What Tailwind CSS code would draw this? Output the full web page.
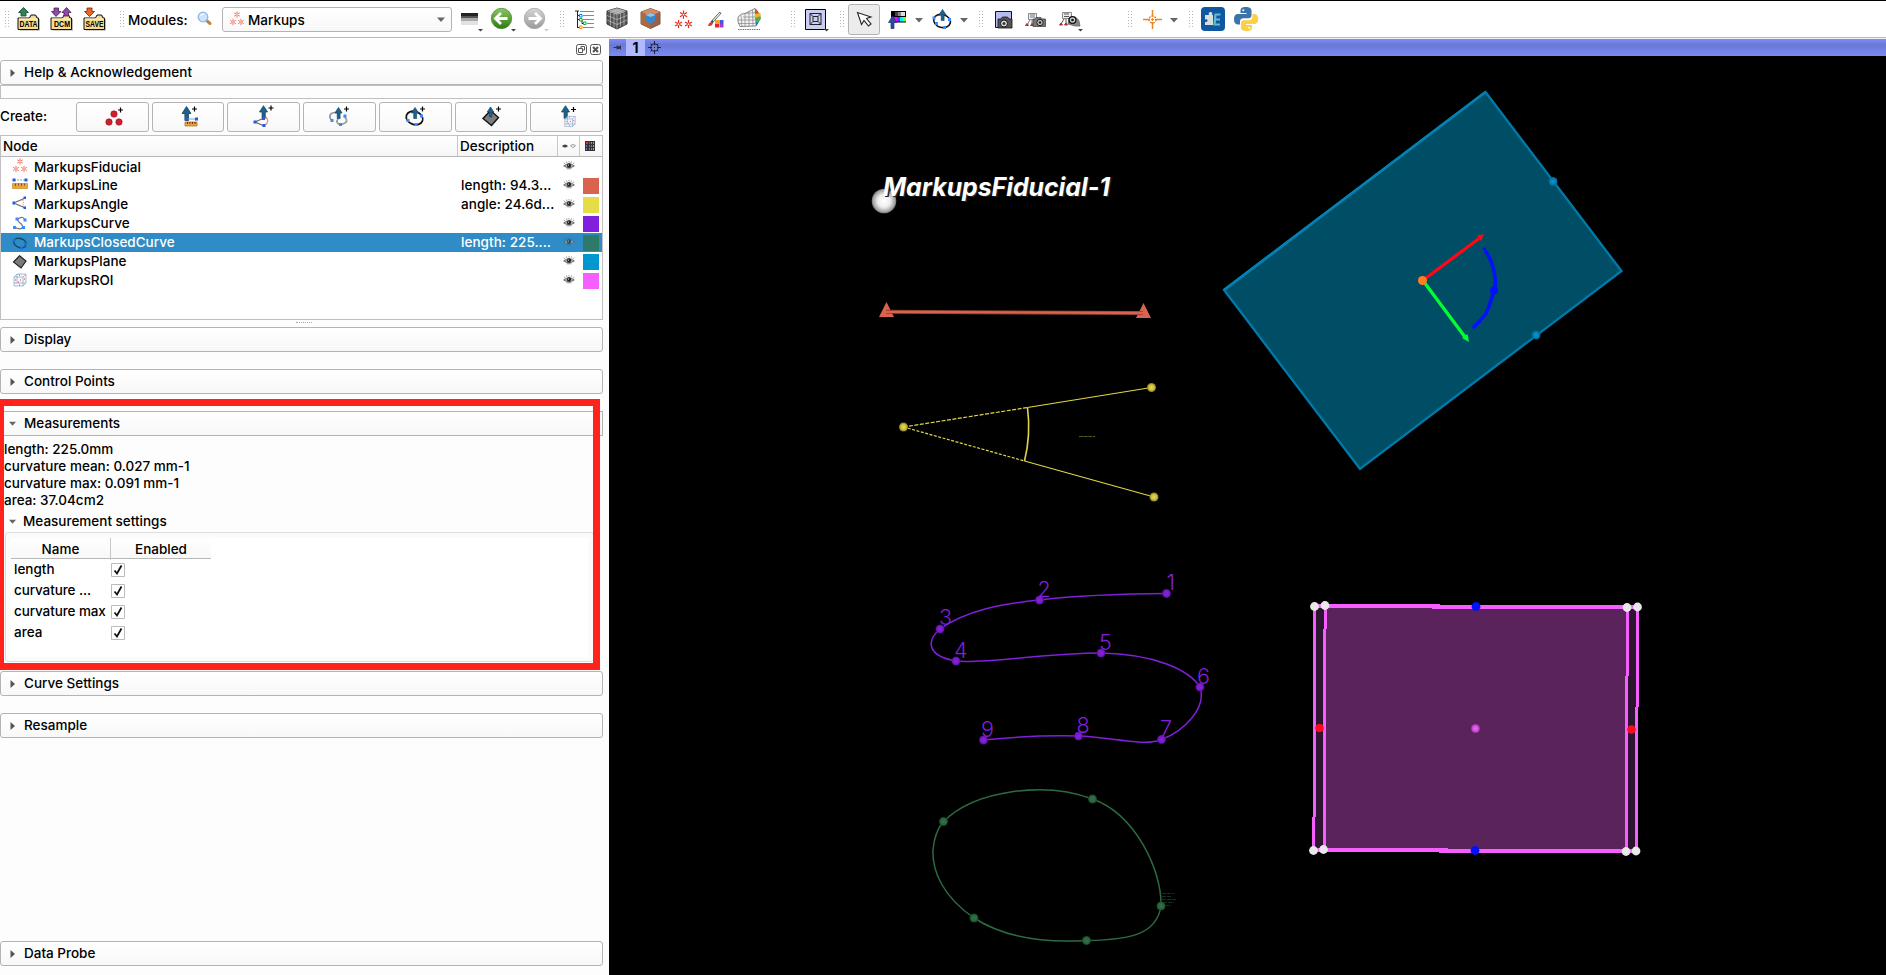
<!DOCTYPE html>
<html lang="en">
<head>
<meta charset="utf-8">
<title>Markups</title>
<script src="https://cdn.jsdelivr.net/npm/@tailwindcss/browser@4"></script>
</head>
<body class="w-[1886px] h-[975px] overflow-hidden bg-[#fdfdfd] text-black text-[13.5px] leading-[17px] font-medium font-['Inter',sans-serif] flex flex-col">

<!-- shared symbols; toolbar icons are drawn in toolbar coordinates -->
<svg class="absolute w-0 h-0">
  <defs>
    <symbol id="grip" viewBox="0 0 6 18"><path d="M1.5 1v17M4.5 1v17" stroke="#b5b5b5" stroke-dasharray="1 2" /></symbol>
    <symbol id="star" viewBox="0 0 8 8"><path d="M4 .2v7.600M.8 2.100l6.400 3.800M7.200 2.100L.8 5.900" stroke="currentColor" stroke-width="1.100" fill="none"/><circle cx="4" cy="4" r=".8" fill="#fff"/></symbol>
    <symbol id="stars" viewBox="0 0 16 16"><use href="#star" x="4.5" y="1" width="7" height="7"/><use href="#star" x="0.5" y="8.5" width="7" height="7"/><use href="#star" x="8.5" y="8.5" width="7" height="7"/></symbol>
    <symbol id="up" viewBox="0 0 10 15"><path d="M5 .5L9.5 7.5H7V14.500H3.400V7.500H.5z" fill="#1f5f8b" stroke="#12405f" stroke-width=".8"/></symbol>
    <symbol id="eye" viewBox="0 0 14 11"><path d="M.5 6Q7 .8 13.500 6 7 10.500.5 6z" fill="#bbb" stroke="#555" stroke-width="1"/><circle cx="7" cy="5.500" r="2.600" fill="#222"/><circle cx="6.300" cy="5" r=".8" fill="#ddd"/><path d="M2 3.500L1 2M4.500 2.300L4 .7M7 1.800V.2M9.500 2.300l.6-1.600M12 3.500l1-1.500M4 9.500h6" stroke="#555" stroke-width=".8"/></symbol>
    <symbol id="right" viewBox="0 0 5 8"><path d="M.5 0v8L5 4z" fill="#555"/></symbol>
    <symbol id="down" viewBox="0 0 8 5"><path d="M0 .5h8L4 5z" fill="#666"/></symbol>
    <symbol id="roi" viewBox="0 0 14 14"><path d="M1 4l3-3h9v9l-3 3H1zM1 4h9v9M10 4l3-3M4 1v9H1m3 0h9" fill="#eef4fb" fill-opacity=".6" stroke="#94aac6" stroke-width=".8"/><path d="M2 7h1M5 9h1M7 7h1M11 6h1M6 2h1M6 12h1" stroke="#e33" stroke-width="1"/></symbol>
    <symbol id="folder" viewBox="0 0 24 18"><path d="M2 5.500h11l1.500-3.500h4.500l1.500 3.500H22V17H2z" fill="#333" opacity=".45" transform="translate(.8 .6)"/><path d="M1 5h11.500L14 2h4.500L20 5h1.500v11.500H1z" fill="#f4dc92" stroke="#111" stroke-width="1"/><path d="M2 6h18.500" stroke="#fff6d0"/></symbol>
    <radialGradient id="sph"><stop offset="0" stop-color="#fff"/><stop offset=".5" stop-color="#eee"/><stop offset=".85" stop-color="#aaa"/><stop offset="1" stop-color="#777"/></radialGradient>
    <radialGradient id="gy"><stop offset="0" stop-color="#e8dc4c"/><stop offset=".6" stop-color="#cbc03e"/><stop offset="1" stop-color="#7d7620"/></radialGradient>
    <radialGradient id="gp"><stop offset="0" stop-color="#8a22e2"/><stop offset=".7" stop-color="#751bc4"/><stop offset="1" stop-color="#400d70"/></radialGradient>
    <radialGradient id="gg"><stop offset="0" stop-color="#307348"/><stop offset=".7" stop-color="#29643d"/><stop offset="1" stop-color="#153820"/></radialGradient>
    <radialGradient id="gb"><stop offset="0" stop-color="#0a95cf"/><stop offset=".6" stop-color="#0580b4"/><stop offset="1" stop-color="#005f86"/></radialGradient>
    <radialGradient id="gm"><stop offset="0" stop-color="#f560ff"/><stop offset=".6" stop-color="#d650e0"/><stop offset="1" stop-color="#8a3590"/></radialGradient>
    <linearGradient id="grn" x2="0" y2="1"><stop offset="0" stop-color="#8fc75f"/><stop offset="1" stop-color="#2b7a12"/></linearGradient>
    <linearGradient id="gry" x2="0" y2="1"><stop offset="0" stop-color="#d6d6d6"/><stop offset="1" stop-color="#999"/></linearGradient>
  </defs>
</svg>

<!-- toolbar -->
<header class="h-[38px] shrink-0 border-t border-t-black border-b border-b-[#b9b9b9] bg-white flex items-stretch">
  <svg class="shrink-0 w-[128px] h-[36px]" viewBox="0 1 128 36" font-family="Liberation Sans" font-weight="bold" font-size="8.500">
    <use href="#grip" x="4" y="10" width="6" height="18"/>
    <use href="#folder" x="17" y="13" width="24" height="18"/><path d="M23.500 7.500l5 5H26V16h-5v-3.500h-2.500z" fill="#2c8457" stroke="#143" stroke-width=".8"/><text x="19.500" y="27" textLength="18" lengthAdjust="spacingAndGlyphs">DATA</text>
    <use href="#folder" x="50" y="13" width="24" height="18"/><path d="M56 16.500l-4.500-5H54V8h4.500v3.500H61z" fill="#9146b4" stroke="#424" stroke-width=".8"/><path d="M66.500 7.500l4.500 5h-2.500V16H64v-3.500h-2z" fill="#9146b4" stroke="#424" stroke-width=".8"/><text x="54" y="27" textLength="16" lengthAdjust="spacingAndGlyphs">DCM</text>
    <use href="#folder" x="83" y="13" width="24" height="18"/><path d="M89.500 16.500l-5-5H87V8h5v3.500h2.500z" fill="#ee6420" stroke="#721" stroke-width=".8"/><text x="85.500" y="27" textLength="18" lengthAdjust="spacingAndGlyphs">SAVE</text>
    <use href="#grip" x="119" y="10" width="6" height="18"/>
  </svg>
  <span class="w-[66px] shrink-0 self-center whitespace-nowrap pt-[2px]">Modules:</span>
  <svg class="shrink-0 w-[28px] h-[36px]" viewBox="194 1 28 36"><path d="M206 20l4 3.500" stroke="#b98746" stroke-width="3" stroke-linecap="round"/><circle cx="203" cy="17" r="4.800" fill="#cfe4fb" stroke="#8ab8ea" stroke-width="1.300"/><path d="M200.500 16a3 3 0 0 1 3-2" stroke="#fff" fill="none"/></svg>
  <div class="w-[230px] h-[25px] mt-[6px] shrink-0 border border-[#b4b4b4] rounded-[3px] bg-linear-to-b from-white to-[#f8f8f8] flex items-center px-[6px]">
    <svg class="w-4 h-4 text-[#f0705c] mr-[3px] mb-1" viewBox="0 0 16 16"><use href="#stars"/></svg>
    <span class="grow pt-px">Markups</span>
    <svg class="w-2 h-[5px]"><use href="#down"/></svg>
  </div>
  <svg class="shrink-0 w-[434px] h-[36px]" viewBox="452 1 434 36">
    <path d="M461 13h17v4h-17z" fill="#222"/><path d="M461 16h17v2h-17z" fill="#555"/><path d="M461 18h17v3h-17z" fill="#aaa"/><path d="M461 21h17v4h-17z" fill="#e2e2e2"/>
    <path d="M478 29h5l-2.500 2.500zM511 29h5l-2.500 2.500z" fill="#444"/><path d="M544 29h5l-2.500 2.500z" fill="#ccc"/>
    <circle cx="501.500" cy="18.500" r="10.200" fill="url(#grn)" stroke="#4b8b36" stroke-width=".8"/><path d="M507.500 18.500H496M501 13l-5.500 5.500L501 24" stroke="#fff" stroke-width="2.800" fill="none"/>
    <circle cx="534.500" cy="18.500" r="10.200" fill="url(#gry)" stroke="#a2a2a2" stroke-width=".8"/><path d="M528.500 18.500H540M535 13l5.500 5.500L535 24" stroke="#fff" stroke-width="2.800" fill="none"/>
    <use href="#grip" x="559" y="10" width="6" height="18"/>
    <path d="M575 11h4" stroke="#222"/><path d="M580 11.500h14M583 15.500h11M583 19.500h11M587 23.500h7M583 27.500h11" stroke="#888"/><path d="M577.500 11v17M577 15.500h3M577 19.500h5v4h2M577 27.500h3" stroke="#222" fill="none"/><path d="M579.500 14.500h2.500v2.500h-2.500z" fill="#fff" stroke="#17f"/><path d="M579.500 18.500h2.500v2.500h-2.500zM583.500 22h2.500v2.500h-2.500z" fill="#fff" stroke="#1a4"/><path d="M579.500 26h2.500v2.500h-2.500z" fill="#fff" stroke="#f80"/>
    <path d="M607 11l10-3 10 3v13l-10 5-10-5z" fill="#555" stroke="#333"/><path d="M607 11l10-3 10 3-10 4z" fill="#999"/><path d="M607 15.500l10 4 10-4M607 20l10 4.500 10-4.500M610.500 12.500v13M614 14v13.500M617 15v14M620.500 13.500v13M624 12.500v13M610.500 10l10 3.500M613.500 9l10 3.500M623.500 10l-10 4M620.500 9l-10 3.500" stroke="#ccc" stroke-width=".6" fill="none"/>
    <path d="M641 12l9.500-3.500L660 12v12l-9.500 4.500L641 24z" fill="#9b6045" stroke="#7b5a4a"/><path d="M641 12l9.500-3.500L660 12l-9.500 4z" fill="#d58a5f"/><path d="M650.500 16v12.500L641 24V12z" fill="#b0683f"/><path d="M645.500 15l5-2 5 2v6l-5 3-5-3z" fill="#3a87c8"/><path d="M645.500 15l5-2 5 2-5 2z" fill="#8cc4ef"/>
    <svg x="673.500" y="9" width="20" height="20" viewBox="0 0 16 16" color="#e32a1a"><use href="#stars"/></svg>
    <path d="M715 20h4v4h-4z" fill="#f4a81c"/><path d="M719.500 20h4v4h-4z" fill="#3d57f0"/><path d="M715 24h4v3.500h-4z" fill="#e4262c"/><path d="M719.500 24h4v3.500h-4z" fill="#a536cf"/><path d="M720.500 12.500l-9 10" stroke="#444" stroke-width="2.500"/><path d="M720 13l-7 7.800" stroke="#eee" stroke-width="1.200"/><path d="M708 26q1-4 3.500-4l1.500 1.500q-1 3-5 2.500z" fill="#d33"/>
    <path d="M738 17q3-4 7-3.500l10-5q5 5 5.500 10l-4.500 7.500-16 .5q-3-5-2-9.500z" fill="#f2f2f2" stroke="#555" stroke-width=".7"/><path d="M741 15l1 11.500M745 13.500v13M749 11.500v15M752.500 10l.5 16M738 20h17M738 23.500h17M743 17h12M746 13.500l9-1" stroke="#777" stroke-width=".6"/><path d="M755 8.500q6 5 5.500 10L756 26q-2-9-1-17.500z" fill="#4bb04a"/><path d="M755 8.500q3 2 4.500 6L755 17z" fill="#e84b1d"/><path d="M755 14l5.500-1 .2 3L755 18z" fill="#f2b51e"/><path d="M755.500 22l3 .2-2.500 4z" fill="#2a73c8"/><path d="M738 29.500h22" stroke="#777" stroke-dasharray="1.500 .8" stroke-width="1.200"/>
    <use href="#grip" x="790" y="10" width="6" height="18"/>
    <path d="M805.500 9.500h20v20h-20z" fill="#cccdf2" stroke="#000"/><path d="M810 13.500h11v11h-11zM813 16.500h5v5H813zM810 13.500l3 3M821 13.500l-3 3M810 24.500l3-3M821 24.500l-3-3" stroke="#222" stroke-width="1" fill="none"/><path d="M824 29h5l-2.500 2.500z" fill="#444"/>
    <use href="#grip" x="839" y="10" width="6" height="18"/>
    <rect x="848.500" y="4.500" width="31" height="30" rx="2" fill="#ececec" stroke="#b2b2b2"/><path d="M857.500 12.500l4 12 2.500-4 4.500 5.500 2.500-2-4.500-5.500 4.500-1.500z" fill="#fff" stroke="#222" stroke-width="1.100"/>
  </svg>
  <svg class="shrink-0 w-[384px] h-[36px]" viewBox="886 1 384 36">
    <path d="M891 11h15v6h-15z" fill="#000"/><path d="M895 12h3v4h-3z" fill="#444"/><path d="M898 12h3v4h-3z" fill="#888"/><path d="M901 12h4v4h-4z" fill="#ddd"/><path d="M891 17h3v5h-3z" fill="#f03"/><path d="M894 17h3v5h-3z" fill="#f0f"/><path d="M897 17h3v5h-3z" fill="#44f"/><path d="M900 17h3v5h-3z" fill="#0ee"/><path d="M903 17h3v5h-3z" fill="#7f2"/><path d="M891 22h15" stroke="#000"/>
    <path d="M892.500 16l4 6.500H894V28.500h-3v-6h-2.500z" fill="#2b4b9b" stroke="#1d3575" stroke-width=".7"/>
    <path d="M915 18h8l-4 4.500zM960 18h8l-4 4.500zM1170 18h8l-4 4.500z" fill="#666"/>
    <ellipse cx="942" cy="21" rx="8.500" ry="6.500" fill="none" stroke="#111" stroke-width="1.600" transform="rotate(15 942 21)"/><use href="#up" x="937" y="9" width="11" height="12"/><path d="M932.500 16.500h3v3h-3zM948 18h3v3h-3zM935 22h3v3h-3zM943 26h3v3h-3z" fill="#3b8bff"/>
    <use href="#grip" x="978" y="10" width="6" height="18"/>
    <path d="M995.500 11.500h16v16h-16z" fill="#b5bbf3" stroke="#111"/><path d="M998 19h3l1.500-2h5l1.500 2h3v9h-14z" fill="#555" stroke="#111" stroke-width=".8"/><circle cx="1004" cy="23.500" r="3.500" fill="#ddd" stroke="#111"/><circle cx="1004" cy="23.500" r="1.500" fill="#333"/>
    <path d="M1028.500 13.500h8v6h-8z" fill="#eef" stroke="#888"/><path d="M1030 20l-3 5M1032 20v5M1030 15h5M1030 17h5" stroke="#777" fill="none"/><path d="M1025.500 25.500l1.500-2 1.500 2zM1030.500 25.500l1.500-2 1.500 2z" fill="#a33" stroke="#a33"/><path d="M1033 19h2l1-1.500h5l1 1.500h3.500v7.500H1033z" fill="#777" stroke="#444" stroke-width=".8"/><circle cx="1040" cy="22.500" r="3.200" fill="#bbb" stroke="#222"/><circle cx="1040" cy="22.500" r="1.200" fill="#222"/>
    <path d="M1062.500 12.500h9v6h-9z" fill="#eef" stroke="#888"/><path d="M1064 19l-3 5M1066 19v5M1064 14h5M1064 16.500h5" stroke="#555" fill="none"/><path d="M1059.500 25l1.500-2 1.500 2zM1064.500 25l1.500-2 1.500 2z" fill="#a33" stroke="#a33"/><path d="M1069 18q7-3 10 3l1 5h-5l-7-2z" fill="#888" stroke="#666" stroke-width=".8"/><circle cx="1072.500" cy="20" r="3.400" fill="#ccc" stroke="#111" stroke-width="1.300"/><circle cx="1072.500" cy="20" r="1.300" fill="#111"/><path d="M1078 29h5l-2.500 2.500z" fill="#444"/>
    <use href="#grip" x="1127" y="10" width="6" height="18"/>
    <g stroke="#e8862a" fill="none" stroke-width="1.500"><path d="M1152.500 10v7M1152.500 22v7M1143 19.500h7M1155 19.500h7"/><circle cx="1152.500" cy="19.500" r="3.500" stroke-dasharray="2 1"/><path d="M1151 19.500h3M1152.500 18v3" stroke-width="1.200"/></g>
    <use href="#grip" x="1188" y="10" width="6" height="18"/>
    <rect x="1201" y="7" width="24" height="24" rx="4" fill="#1156a0"/><path d="M1205 15h4q-1-3 1.500-3t1.500 3h1v10h-8v-3q2.500.5 2.500-1.500t-2.500-1z" fill="#d9dfdf"/><path d="M1220.500 14.500h-5l-1 10h5.500M1215 19.500h5" stroke="#5bc0d2" stroke-width="2.200" fill="none"/>
    <path d="M1246 7c-5 0-5.500 2-5.500 3.500V13h6v1h-8.500c-3 0-4 2.500-4 5.300s1.300 5.200 3.700 5.200h2.300v-3c0-2 1.500-3.200 3.500-3.200h5c1.800 0 3-1.300 3-3v-4.800C1251.500 8 1249 7 1246 7z" fill="#3a74a8"/><path d="M1246.500 31c5 0 5.500-2 5.500-3.500V25h-6v-1h8.500c2.500 0 3.700-2.400 3.700-5s-1-5-3.500-5h-2.300v2.800c0 2-1.500 3.400-3.500 3.400h-5c-1.800 0-3 1.200-3 3v4.500c0 2.300 2.600 3.300 5.600 3.300z" fill="#fcd045"/><circle cx="1243.300" cy="10.200" r="1" fill="#fff"/><circle cx="1249.200" cy="27.800" r="1" fill="#fff"/>
  </svg>
</header>

<div class="flex grow min-h-0">
  <!-- module panel -->
  <aside class="relative w-[609px] shrink-0 flex flex-col pr-[6px]">
    <div class="h-[22px] shrink-0 flex justify-end items-center gap-[3px] pr-[2px]">
      <svg class="w-[11px] h-[11px]" viewBox="0 0 11 11" fill="none" stroke="#555"><rect x=".5" y=".5" width="10" height="10" rx="2"/><path d="M5 4V2.500h3.500V6H7M2.500 4.500h4v4h-4z"/></svg>
      <svg class="w-[11px] h-[11px]" viewBox="0 0 11 11" fill="none" stroke="#555"><rect x=".5" y=".5" width="10" height="10" rx="2"/><path d="M3 3l5 5M8 3L3 8" stroke-width="2"/></svg>
    </div>
    <div class="h-[25px] shrink-0 border border-[#b4b4b4] rounded-[3px] bg-linear-to-b from-white to-[#f8f8f8] flex items-center pl-[9px]"><svg class="w-[5px] h-2 mr-[9px]"><use href="#right"/></svg><span class="tracking-[0.08px]">Help &amp; Acknowledgement</span></div>
    <div class="h-[14px] shrink-0 border border-[#c0c0c0]"></div>
    <div class="h-[36px] shrink-0 flex items-center pt-0">
      <span class="w-[76px] pb-px">Create:</span>
      <div class="grow grid grid-cols-7 gap-[3px]">
        <div class="h-[30px] border border-[#b4b4b4] rounded-[3px] bg-linear-to-b from-white to-[#f8f8f8] flex justify-center items-center pl-[3px]"><svg class="w-6 h-6" viewBox="0 0 24 24"><g fill="#cf1f2c" stroke="#8a1019" stroke-width=".6"><circle cx="12" cy="9" r="3.200"/><circle cx="7" cy="17" r="3.200"/><circle cx="17" cy="17" r="3.200"/></g><path d="M18.500 2.500v5M16 5h5" stroke="#000" stroke-width="1.200"/></svg></div>
        <div class="h-[30px] border border-[#b4b4b4] rounded-[3px] bg-linear-to-b from-white to-[#f8f8f8] flex justify-center items-center pl-[3px]"><svg class="w-6 h-6" viewBox="0 0 24 24"><use href="#up" x="3.500" y="1" width="10" height="15"/><path d="M8 14h12" stroke="#99b" /><path d="M7 12.500h3v3H7zM17 12.500h3v3h-3z" fill="#245bdc"/><path d="M7 17h12v4H7z" fill="#eba43a" stroke="#a66a14" stroke-width=".7"/><path d="M9.500 17v2M12 17v2M14.500 17v2M17 17v2" stroke="#633"/><path d="M16.500 1.500v5M14 4h5" stroke="#000" stroke-width="1.200"/></svg></div>
        <div class="h-[30px] border border-[#b4b4b4] rounded-[3px] bg-linear-to-b from-white to-[#f8f8f8] flex justify-center items-center pl-[1px]"><svg class="w-6 h-6" viewBox="0 0 24 24"><path d="M3 17l9-4M3 17l8 3.500" stroke="#666" stroke-width="1.300"/><path d="M14 12q4 5-1 8" stroke="#e88" fill="none" stroke-width="1.300"/><use href="#up" x="7" y="0" width="9" height="14"/><path d="M1.500 15.500h3v3h-3zM10 12h3v3h-3zM10.500 19h3v3h-3z" fill="#245bdc"/><path d="M19 .5v5M16.500 3h5" stroke="#000" stroke-width="1.200"/></svg></div>
        <div class="h-[30px] border border-[#b4b4b4] rounded-[3px] bg-linear-to-b from-white to-[#f8f8f8] flex justify-center items-center"><svg class="w-6 h-6" viewBox="0 0 24 24"><path d="M5 15.500C1 12 3 7.500 8 7.500S13 12 11 14s-1 5.500 2.500 5.500 7-2.500 6-5-2-2-2.500-3.500" fill="none" stroke="#999" stroke-width="1.700"/><use href="#up" x="7" y="2" width="9" height="12"/><path d="M3.500 14h3v3h-3zM16.500 9.500h3v3h-3zM12 18h3v3h-3z" fill="#3b8bff"/><path d="M19.500 1.500v5M17 4h5" stroke="#000" stroke-width="1.200"/></svg></div>
        <div class="h-[30px] border border-[#b4b4b4] rounded-[3px] bg-linear-to-b from-white to-[#f8f8f8] flex justify-center items-center"><svg class="w-6 h-6" viewBox="0 0 24 24"><ellipse cx="11.500" cy="13" rx="8.500" ry="6.500" fill="none" stroke="#111" stroke-width="1.700" transform="rotate(20 11.500 13)"/><use href="#up" x="7.500" y="2" width="9" height="12"/><path d="M3.500 14h3v3h-3zM17 9.500h3v3h-3zM11.500 18h3v3h-3z" fill="#3b8bff"/><path d="M19.500 1.500v5M17 4h5" stroke="#000" stroke-width="1.200"/></svg></div>
        <div class="h-[30px] border border-[#b4b4b4] rounded-[3px] bg-linear-to-b from-white to-[#f8f8f8] flex justify-center items-center"><svg class="w-6 h-6" viewBox="0 0 24 24"><path d="M11.500 5.500l8 7-7 8-8.500-7z" fill="#7d7d7d" stroke="#111" stroke-width="1.400"/><use href="#up" x="7" y="1.500" width="9" height="11"/><path d="M19.500 1.500v5M17 4h5" stroke="#000" stroke-width="1.200"/></svg></div>
        <div class="h-[30px] border border-[#b4b4b4] rounded-[3px] bg-linear-to-b from-white to-[#f8f8f8] flex justify-center items-center pl-[5px]"><svg class="w-6 h-6" viewBox="0 0 24 24"><use href="#up" x="4" y="0" width="9" height="14"/><use href="#roi" x="7" y="10.500" width="12" height="12"/><path d="M16.500 2v5M14 4.500h5" stroke="#000" stroke-width="1.200"/></svg></div>
      </div>
    </div>

    <!-- node table -->
    <div class="h-[185px] shrink-0 border border-[#c0c0c0] bg-white flex flex-col">
      <div class="h-[21px] shrink-0 border-b border-[#b8b8b8] bg-linear-to-b from-white to-[#f6f6f6] grid grid-cols-[456px_100px_22px_1fr] items-center">
        <span class="pl-[2px] pt-px">Node</span>
        <span class="pl-[2px] pt-px border-l border-[#c8c8c8] leading-[19px]">Description</span>
        <span class="h-full border-l border-[#c8c8c8] flex justify-center items-center"><svg class="w-[14px] h-[6px]" viewBox="0 0 14 6"><path d="M0 3q3-3 6 0-3 3-6 0z" fill="#444"/><path d="M8.500 2.500q2.500 4 5 0M8.500 2.500q2.500-2 5 0" fill="none" stroke="#999"/></svg></span>
        <span class="h-full border-l border-[#c8c8c8] flex items-center pl-[5px]"><svg class="w-[10px] h-[10px]" viewBox="0 0 10 10"><path fill="#333" d="M0 0h10v10H0z"/><path d="M1 1h2v2H1z" fill="#f22"/><path d="M4 1h1v2H4z" fill="#a44"/><path d="M6 1h1v2H6zM8 1h1v2H8z" fill="#6b6"/><path d="M1 4h1v2H1zM1 7h1v2H1z" fill="#96c"/><path d="M4 4h1v2H4zM4 7h1v2H4z" fill="#487"/><path d="M6 4h1v2H6zM6 7h1v2H6z" fill="#58b"/><path d="M8 4h1v2H8zM8 7h1v2H8z" fill="#aa7"/></svg></span>
      </div>

      <div class="h-[19px] shrink-0 grid grid-cols-[33px_423px_103px_23px_1fr] items-center"><svg class="w-4 h-4 ml-[11px] mb-1 text-[#ee6f5a]" viewBox="0 0 16 16"><use href="#stars"/></svg><span>MarkupsFiducial</span><span></span><svg class="w-3 h-[9px] mb-[3px] ml-[3px]"><use href="#eye"/></svg><span></span></div>
      <div class="h-[19px] shrink-0 grid grid-cols-[33px_423px_103px_23px_1fr] items-center"><svg class="w-4 h-[14px] ml-[11px] mb-[3px]" viewBox="0 0 16 14"><path d="M2 3h12" stroke="#99b" stroke-dasharray="2 1"/><path d="M.5 1.500h3v3h-3zM12.500 1.500h3v3h-3z" fill="#245bdc"/><path d="M.5 6.500h15v5H.5z" fill="#eba43a" stroke="#c98a2a" stroke-width=".7"/><path d="M3.500 6.500v2.500M6.500 6.500v2M9.500 6.500v2.500M12.500 6.500v2" stroke="#754"/></svg><span>MarkupsLine</span><span class="pl-[4px] tracking-[0.08px]">length: 94.3...</span><svg class="w-3 h-[9px] mb-[3px] ml-[3px]"><use href="#eye"/></svg><i class="w-4 h-4 bg-[#d9634f]"></i></div>
      <div class="h-[19px] shrink-0 grid grid-cols-[33px_423px_103px_23px_1fr] items-center"><svg class="w-4 h-[14px] ml-[11px] mb-[3px]" viewBox="0 0 16 14"><path d="M1.500 7l12-5M1.500 7l12 5" stroke="#666" stroke-width="1.100"/><path d="M10.500 4q2 3 0 6" stroke="#e66" fill="none" stroke-dasharray="1 1"/><path d="M.5 5.500h2.500v3H.5zM11.500.5h2.500v2.500h-2.500zM11.500 10.500h2.500v2.500h-2.500z" fill="#245bdc"/></svg><span>MarkupsAngle</span><span class="pl-[4px] tracking-[0.05px]">angle: 24.6d...</span><svg class="w-3 h-[9px] mb-[3px] ml-[3px]"><use href="#eye"/></svg><i class="w-4 h-4 bg-[#e6dc48]"></i></div>
      <div class="h-[19px] shrink-0 grid grid-cols-[33px_423px_103px_23px_1fr] items-center"><svg class="w-4 h-4 ml-[11px] mb-[2px]" viewBox="0 0 16 16"><path d="M13 5Q11 1 7.500 3T8 8t2 5-8-1" stroke="#778" stroke-width="1.300" fill="none"/><path d="M3.500 2.500h3v3h-3zM11.500 3.500h3v3h-3zM1 11h3v3H1zM10 11h3v3h-3z" fill="#3b8bff"/></svg><span>MarkupsCurve</span><span></span><svg class="w-3 h-[9px] mb-[3px] ml-[3px]"><use href="#eye"/></svg><i class="w-4 h-4 bg-[#801fdc]"></i></div>
      <div class="h-[19px] shrink-0 grid grid-cols-[33px_423px_103px_23px_1fr] items-center bg-[#308cc6] text-white"><svg class="w-4 h-[14px] ml-[11px]" viewBox="0 0 16 14"><ellipse cx="8" cy="7" rx="6.500" ry="4.500" transform="rotate(20 8 7)" fill="none" stroke="#17466c" stroke-width="1.400"/><path d="M.5 3h3v3h-3zM12 7h3v3h-3zM8 10.500h3v3H8z" fill="#1b6fd8"/></svg><span>MarkupsClosedCurve</span><span class="pl-[4px] tracking-[0.05px]">length: 225....</span><svg class="w-3 h-[9px] mb-[3px] ml-[3px] opacity-60"><use href="#eye"/></svg><i class="w-4 h-4 bg-[#2d7a6b]"></i></div>
      <div class="h-[19px] shrink-0 grid grid-cols-[33px_423px_103px_23px_1fr] items-center"><svg class="w-4 h-[14px] ml-[11px]" viewBox="0 0 16 14"><path d="M7.500.8l6.500 5.200-5 7-7.500-6z" fill="#7a7a7a" stroke="#222" stroke-width="1.200"/></svg><span>MarkupsPlane</span><span></span><svg class="w-3 h-[9px] mb-[3px] ml-[3px]"><use href="#eye"/></svg><i class="w-4 h-4 bg-[#0097d0]"></i></div>
      <div class="h-[19px] shrink-0 grid grid-cols-[33px_423px_103px_23px_1fr] items-center"><svg class="w-[14px] h-[14px] ml-[12px] mb-[2px]"><use href="#roi"/></svg><span>MarkupsROI</span><span></span><svg class="w-3 h-[9px] mb-[3px] ml-[3px]"><use href="#eye"/></svg><i class="w-4 h-4 bg-[#f55fff]"></i></div>
    </div>
    <div class="h-[7px] shrink-0 flex justify-center pt-[2px] pl-[5px]"><i class="w-4 h-px border-t border-dotted border-[#aaa]"></i></div>

    <div class="h-[25px] shrink-0 border border-[#b4b4b4] rounded-[3px] bg-linear-to-b from-white to-[#f8f8f8] flex items-center pl-[9px]"><svg class="w-[5px] h-2 mr-[9px]"><use href="#right"/></svg><span>Display</span></div>
    <div class="h-[25px] mt-[17px] shrink-0 border border-[#b4b4b4] rounded-[3px] bg-linear-to-b from-white to-[#f8f8f8] flex items-center pl-[9px]"><svg class="w-[5px] h-2 mr-[9px]"><use href="#right"/></svg><span>Control Points</span></div>
    <div class="h-[25px] mt-[17px] shrink-0 border border-[#b4b4b4] bg-linear-to-b from-white to-[#f8f8f8] flex items-center pl-[8px]"><svg class="w-[7px] h-[5px] mr-[8px]"><use href="#down"/></svg><span>Measurements</span></div>
    <div class="pl-[4px] pt-[5px] shrink-0 whitespace-nowrap"><p>length: 225.0mm</p><p>curvature mean: 0.027 mm-1</p><p>curvature max: 0.091 mm-1</p><p>area: 37.04cm2</p></div>
    <div class="h-[23px] shrink-0 flex items-center pl-[9px] pt-px"><svg class="w-[7px] h-[5px] mr-[7px]"><use href="#down"/></svg><span>Measurement settings</span></div>
    <div class="h-[130px] mt-0 ml-[5px] mr-[9px] shrink-0 border border-[#dedede] rounded-[3px] bg-[#fbfbfb] p-[5px]">
      <div class="bg-white h-[119px]">
        <div class="w-[200px] h-[21px] border-b border-[#b8b8b8] bg-linear-to-b from-white to-[#f8f8f8] grid grid-cols-[99px_101px] text-center leading-[22px]"><span>Name</span><span class="border-l border-[#c8c8c8]">Enabled</span></div>
        <div class="h-[21px] grid grid-cols-[100px_100px] items-center"><span class="pl-[3px] whitespace-nowrap">length</span><svg class="w-[14px] h-[14px]" viewBox="0 0 14 14"><path d="M.5.5h13v13H.5z" fill="#fff" stroke="#bbb"/><path d="M3.500 7.500l2.500 3 4.500-8" stroke="#111" stroke-width="1.800" fill="none"/></svg></div>
        <div class="h-[21px] grid grid-cols-[100px_100px] items-center"><span class="pl-[3px] whitespace-nowrap tracking-[-0.1px]">curvature ...</span><svg class="w-[14px] h-[14px]" viewBox="0 0 14 14"><path d="M.5.5h13v13H.5z" fill="#fff" stroke="#bbb"/><path d="M3.500 7.500l2.500 3 4.500-8" stroke="#111" stroke-width="1.800" fill="none"/></svg></div>
        <div class="h-[21px] grid grid-cols-[100px_100px] items-center"><span class="pl-[3px] whitespace-nowrap tracking-[-0.1px]">curvature max</span><svg class="w-[14px] h-[14px]" viewBox="0 0 14 14"><path d="M.5.5h13v13H.5z" fill="#fff" stroke="#bbb"/><path d="M3.500 7.500l2.500 3 4.500-8" stroke="#111" stroke-width="1.800" fill="none"/></svg></div>
        <div class="h-[21px] grid grid-cols-[100px_100px] items-center"><span class="pl-[3px] whitespace-nowrap">area</span><svg class="w-[14px] h-[14px]" viewBox="0 0 14 14"><path d="M.5.5h13v13H.5z" fill="#fff" stroke="#bbb"/><path d="M3.500 7.500l2.500 3 4.500-8" stroke="#111" stroke-width="1.800" fill="none"/></svg></div>
      </div>
    </div>
    <div class="h-[25px] mt-[9px] shrink-0 border border-[#b4b4b4] rounded-[3px] bg-linear-to-b from-white to-[#f8f8f8] flex items-center pl-[9px]"><svg class="w-[5px] h-2 mr-[9px]"><use href="#right"/></svg><span>Curve Settings</span></div>
    <div class="h-[25px] mt-[17px] shrink-0 border border-[#b4b4b4] rounded-[3px] bg-linear-to-b from-white to-[#f8f8f8] flex items-center pl-[9px]"><svg class="w-[5px] h-2 mr-[9px]"><use href="#right"/></svg><span>Resample</span></div>
    <div class="h-[25px] mt-auto mb-[9px] shrink-0 border border-[#b4b4b4] rounded-[3px] bg-linear-to-b from-white to-[#f8f8f8] flex items-center pl-[9px]"><svg class="w-[5px] h-2 mr-[9px]"><use href="#right"/></svg><span>Data Probe</span></div>

    <!-- highlight frame -->
    <div class="absolute left-[-3px] top-[361px] w-[603px] h-[271px] border-[7px] border-[#ff231c]"></div>
  </aside>

  <!-- 3D view -->
  <main class="grow flex flex-col bg-black pt-0">
    <div class="h-px shrink-0 bg-[#f4f4f4]"></div>
    <div class="h-[17px] shrink-0 flex items-stretch bg-linear-to-b from-[#7f8cf6] via-[#6a78d6] via-35% to-[#7b8af6]">
      <svg class="w-[17px] h-[17px]" viewBox="0 0 17 17"><path d="M4.500 8.500H8M8 6.500v4M8.500 7.500h2v2h-2zM11.500 6.500v4" stroke="#334" fill="#334"/></svg>
      <span class="w-[19px] bg-[#b0b9ff] text-center font-bold leading-[18px] text-[14px]">1</span>
      <svg class="w-[20px] h-[17px]" viewBox="0 0 20 17" fill="none" stroke="#223"><circle cx="9.500" cy="8.500" r="3.800"/><path d="M9.500 2v4M9.500 11v4M3 8.500h4M12 8.500h4M5.500 4.500l1.500 1.500M13.500 4.500L12 6M5.500 12.500L7 11M13.500 12.500L12 11M9 8.500h1"/></svg>
    </div>
    <svg class="w-[1277px] h-[919px]" viewBox="609 56 1277 919" font-family="Inter">
      <!-- point -->
      <circle cx="884" cy="201" r="12.300" fill="url(#sph)"/>
      <text x="884.500" y="196.500" textLength="227" lengthAdjust="spacingAndGlyphs" font-size="25" font-weight="700" font-style="italic" fill="#222" style="font-feature-settings:'cv11'">MarkupsFiducial-1</text>
      <text x="883" y="195.500" textLength="227" lengthAdjust="spacingAndGlyphs" font-size="25" font-weight="700" font-style="italic" fill="#fff" style="font-feature-settings:'cv11'">MarkupsFiducial-1</text>
      <!-- line -->
      <path d="M886.500 302l7.500 15h-15zM1143.500 303l7.500 15h-15z" fill="#d9634f"/>
      <path d="M886 311.800L1143 313" stroke="#8c3e31" stroke-width="4"/><path d="M886 311.800L1143 313" stroke="#d9634f" stroke-width="2.300"/>
      <!-- angle -->
      <g stroke="#e0d647" fill="none" stroke-width="1.200"><path d="M903.500 427L1027.500 407.500" stroke-dasharray="4 1.500"/><path d="M903.500 427L1024.500 461" stroke-dasharray="3 1.500"/><path d="M1027.500 407.500L1151.500 387.500M1024.500 461L1154 497"/><path d="M1027.500 407.500Q1031 435 1024.500 461" stroke-width="1.600"/></g>
      <path d="M1079 436.500h16" stroke="#5c5720" stroke-dasharray="4 .6"/>
      <g fill="url(#gy)"><circle cx="903.500" cy="427" r="4.500"/><circle cx="1151.500" cy="387.500" r="4.500"/><circle cx="1154" cy="497" r="4.500"/></g>
      <!-- plane -->
      <path d="M1485.500 92L1621.500 271 1360 469 1224 290z" fill="#004d66" stroke="#007aa8" stroke-width="2.300"/><path d="M1224 290L1485.500 92" stroke="#0082b4" stroke-width="2.800"/>
      <g fill="url(#gb)"><circle cx="1553" cy="181.500" r="4.500"/><circle cx="1536" cy="335" r="4.500"/></g>
      <path d="M1424 279.500L1479 238.500" stroke="#ff0814" stroke-width="3.300"/><path d="M1484 234l-3 7-4-5.500z" fill="#ff0814"/><path d="M1424 282L1465 337" stroke="#00ff2e" stroke-width="3.300"/><path d="M1469 342l-7-4 5.500-4z" fill="#00ff2e"/>
      <path d="M1483.500 248Q1495 263 1495.500 284 1491 303 1486 313.500 1481 320 1473 328" fill="none" stroke="#0010ff" stroke-width="3.500"/><circle cx="1494" cy="290.500" r="4" fill="#0010ff"/>
      <circle cx="1422.500" cy="280.500" r="4.500" fill="#ff7d22"/>
      <!-- open curve -->
      <path d="M1166.500 593.500Q1090 594 1039.500 600C1000 604 965 611 940 629C926 641 927 656 956 661C985 664 1045 653 1101 653C1155 654 1189 670 1200 687C1207 708 1184 731 1161.500 739.500C1145 747 1110 737 1078.500 736Q1030 735 983.500 740" fill="none" stroke="#801fdc" stroke-width="1.500"/>
      <g fill="url(#gp)"><circle cx="1166.500" cy="593.500" r="4.500"/><circle cx="1039.500" cy="600" r="4.500"/><circle cx="940" cy="629" r="4.500"/><circle cx="956" cy="661" r="4.500"/><circle cx="1101" cy="653" r="4.500"/><circle cx="1200" cy="687" r="4.500"/><circle cx="1161.500" cy="739.500" r="4.500"/><circle cx="1078.500" cy="736" r="4.500"/><circle cx="983.500" cy="740" r="4.500"/></g>
      <g fill="#801fdc" font-size="21.500" font-weight="300"><text x="1166.500" y="590">1</text><text x="1037.500" y="597">2</text><text x="939" y="625">3</text><text x="954" y="658">4</text><text x="1099" y="649.500">5</text><text x="1197" y="684">6</text><text x="1160" y="736">7</text><text x="1076.500" y="733">8</text><text x="981" y="737">9</text></g>
      <!-- closed curve -->
      <path d="M1092.500 799C1135 814 1162 870 1161 906C1157 932 1135 940 1086.500 940.500C1045 943 1005 938 974 918C942 896 932 870 933 850C934 838 937 829 943.500 821.500C975 790 1045 781 1092.500 799z" fill="none" stroke="#2c6b42" stroke-width="1.500"/>
      <g fill="url(#gg)"><circle cx="943.500" cy="821.500" r="4.500"/><circle cx="1092.500" cy="799" r="4.500"/><circle cx="1161" cy="906" r="4.500"/><circle cx="1086.500" cy="940.500" r="4.500"/><circle cx="974" cy="918" r="4.500"/></g>
      <path d="M1162 893.500h12M1162 896.500h9M1162 899.500h15M1163 902.500h11M1165 905.500h6" stroke="#12301d" stroke-dasharray="4 1"/>
      <!-- ROI box -->
      <g shape-rendering="crispEdges"><path d="M1314 605H1637V851H1314z" fill="#2d1430"/><path d="M1325 605H1627V850H1325z" fill="#5a235c"/>
      <g fill="#f55fff"><path d="M1313 606h3v211h-3zM1312 817h3v33h-3zM1324 606h3v23h-3zM1323 629h3v221h-3zM1626 607h3v69h-3zM1625 676h3v175h-3zM1636 607h3v100h-3zM1635 707h3v144h-3z"/><path d="M1314 604h126v1h197v4h-205v-1h-118zM1314 848h134v1h189v4h-198v-1h-125z"/></g></g>
      <g fill="#e9e9e9"><circle cx="1314.500" cy="606.500" r="4.400"/><circle cx="1325" cy="605.500" r="4.400"/><circle cx="1627" cy="607.500" r="4.400"/><circle cx="1637.500" cy="607" r="4.400"/><circle cx="1313.500" cy="850.500" r="4.400"/><circle cx="1323.500" cy="849.500" r="4.400"/><circle cx="1626" cy="851.500" r="4.400"/><circle cx="1636" cy="851" r="4.400"/></g>
      <g fill="#ff0a1a"><circle cx="1319.500" cy="728" r="4.300"/><circle cx="1631.500" cy="729.500" r="4.300"/></g>
      <g fill="#0010ff"><circle cx="1476" cy="606.500" r="4.400"/><circle cx="1475" cy="850.500" r="4.400"/></g>
      <circle cx="1475.500" cy="728.500" r="4.500" fill="url(#gm)"/>
    </svg>
  </main>
</div>
</body>
</html>
